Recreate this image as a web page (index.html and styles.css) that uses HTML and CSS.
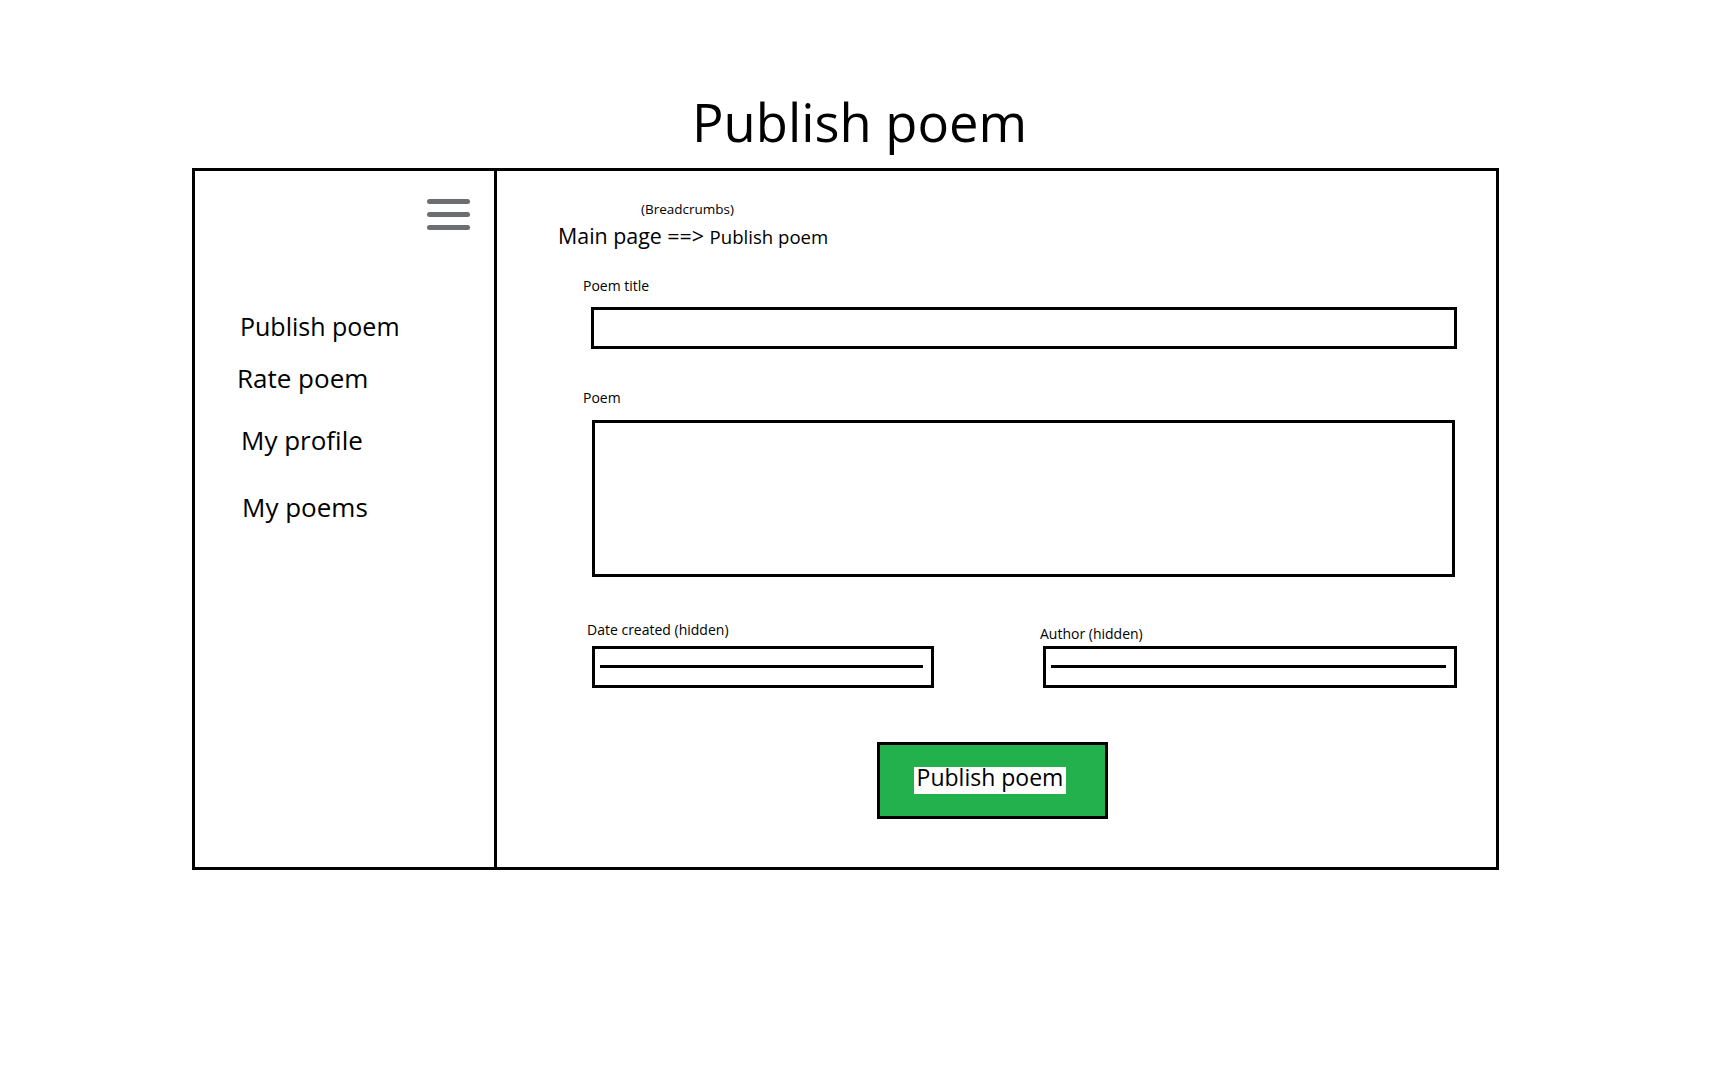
FILE: index.html
```html
<!DOCTYPE html>
<html lang="en">
<head>
<meta charset="utf-8">
<title>Publish poem</title>
<link rel="stylesheet" href="styles.css">
</head>
<body>
<div class="page">
  <h1 class="title">Publish poem</h1>
  <div class="frame">
    <aside class="sidebar">
      <div class="menu-btn" aria-label="Menu"><span></span><span></span><span></span></div>
      <nav class="menu">
        <a class="menu-item menu-item--publish">Publish poem</a>
        <a class="menu-item menu-item--rate">Rate poem</a>
        <a class="menu-item menu-item--profile">My profile</a>
        <a class="menu-item menu-item--poems">My poems</a>
      </nav>
    </aside>
    <main class="content">
      <div class="crumbs-note">(Breadcrumbs)</div>
      <div class="crumbs">Main page ==&gt; <span class="crumbs-current">Publish poem</span></div>

      <label class="label label--title" for="poem-title">Poem title</label>
      <input id="poem-title" class="box input-title" type="text">

      <label class="label label--poem" for="poem-body">Poem</label>
      <textarea id="poem-body" class="box textarea"></textarea>

      <div class="meta-row">
        <div class="meta meta--date">
          <div class="label label--date">Date created (hidden)</div>
          <div class="box hidden-box hidden-box--date"><div class="hidden-line"></div></div>
        </div>
        <div class="meta meta--author">
          <div class="label label--author">Author (hidden)</div>
          <div class="box hidden-box hidden-box--author"><div class="hidden-line"></div></div>
        </div>
      </div>

      <button class="publish-btn" type="button"><span class="publish-btn__label">Publish poem</span></button>
    </main>
  </div>
</div>
</body>
</html>
```

FILE: styles.css
```css
* {
  box-sizing: border-box;
}

body {
  margin: 0;
  background: #fff;
  color: #000;
  font-family: "Open Sans", "Liberation Sans", sans-serif;
}

.page {
  padding: 96px 0 0 192px;
}

.title {
  margin: 0 0 20px 500px;
  font-size: 52.5px;
  line-height: 52px;
  font-weight: 400;
}

.frame {
  display: flex;
  width: 1307px;
  height: 702px;
  border: 3px solid #000;
}

/* Sidebar */
.sidebar {
  width: 302px;
  flex: none;
  border-right: 3px solid #000;
  display: flex;
  flex-direction: column;
}

.menu-btn {
  align-self: flex-end;
  margin: 28px 24px 0 0;
  width: 43px;
  display: flex;
  flex-direction: column;
  gap: 8px;
}

.menu-btn span {
  display: block;
  height: 5px;
  border-radius: 3px;
  background: #6d6e71;
}

.menu {
  display: flex;
  flex-direction: column;
  align-items: flex-start;
  margin-top: 81px;
  padding-left: 45px;
}

.menu-item {
  font-size: 25px;
  line-height: 30px;
  color: #000;
  text-decoration: none;
}

.menu-item--rate {
  margin: 22px 0 0 -3px;
  font-size: 26px;
}

.menu-item--profile {
  margin: 32px 0 0 1px;
  font-size: 26px;
}

.menu-item--poems {
  margin: 37px 0 0 2px;
  font-size: 26px;
}

/* Content */
.content {
  flex: 1;
  display: flex;
  flex-direction: column;
  align-items: flex-start;
}

.crumbs-note {
  margin: 29px 0 0 144px;
  font-size: 13.5px;
  line-height: 18px;
}

.crumbs {
  margin: 4px 0 0 61px;
  font-size: 21.4px;
  line-height: 28px;
}

.crumbs-current {
  font-size: 18.6px;
  line-height: 1;
}

.label {
  display: block;
  font-size: 14px;
  line-height: 19px;
}

.label--title {
  margin: 26px 0 0 86px;
}

.label--poem {
  margin: 39px 0 0 86px;
}

.box {
  display: block;
  border: 3px solid #000;
  border-radius: 0;
  background: #fff;
  padding: 0;
  font: inherit;
  outline: none;
  resize: none;
}

.input-title {
  margin: 12px 0 0 94px;
  width: 866px;
  height: 42px;
}

.textarea {
  margin: 13px 0 0 95px;
  width: 863px;
  height: 157px;
}

.meta-row {
  display: flex;
  align-items: flex-end;
  gap: 106px;
  margin: 43px 0 0 90px;
}

.meta {
  display: flex;
  flex-direction: column;
}

.label--date {
  margin-bottom: 7px;
}

.label--author {
  margin-bottom: 3px;
}

.hidden-box {
  height: 42px;
}

.hidden-box--date {
  margin-left: 5px;
  width: 342px;
}

.hidden-box--author {
  margin-left: 3px;
  width: 414px;
}

.hidden-line {
  height: 3px;
  margin: 16px 8px 0 5px;
  background: #000;
}

.publish-btn {
  margin: 54px 0 0 380px;
  width: 231px;
  height: 77px;
  border: 3px solid #000;
  background: #22b14c;
  padding: 0 0 0 34px;
  display: flex;
  align-items: center;
  font: inherit;
  cursor: pointer;
}

.publish-btn__label {
  display: inline-block;
  width: 152px;
  padding-bottom: 7px;
  background: #fff;
  color: #000;
  font-size: 23px;
  line-height: 20px;
  text-align: center;
}
```
